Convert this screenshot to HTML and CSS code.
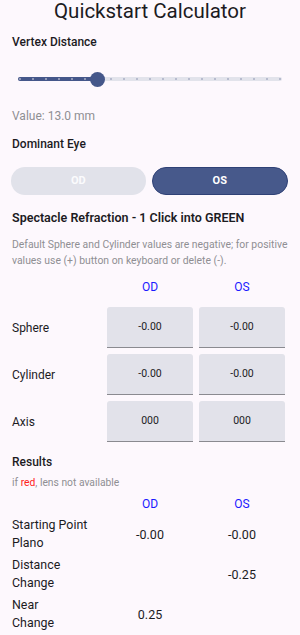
FILE: index.html
```html
<!DOCTYPE html>
<html>
<head>
    <meta charset="utf-8">
    <title>Quickstart Calculator</title>
    <link rel="stylesheet" href="styles.css">
</head>
<body>
    <div id="container">
        <h1 class="title">Quickstart Calculator</h1>

        <div class="label lbl_vertex">Vertex Distance</div>
        <div class="slider">
            <div class="track">
                <div class="track_active" style="width: 30%;"></div>
                <div class="ticks">
                    <span></span><span></span><span></span><span></span><span></span><span></span><span></span>
                    <span></span><span></span><span></span><span></span><span></span><span></span><span></span>
                    <span></span><span></span><span></span><span></span><span></span><span></span><span></span>
                </div>
                <div class="thumb" style="left: 30%;"></div>
            </div>
        </div>
        <div class="value">Value: 13.0 mm</div>

        <div class="label lbl_eye">Dominant Eye</div>
        <div class="eyebtns">
            <a href="#" role="button" class="eyebtn">OD</a>
            <a href="#" role="button" class="eyebtn on">OS</a>
        </div>

        <div class="label lbl_spec">Spectacle Refraction - 1 Click into GREEN</div>
        <p class="help">Default Sphere and Cylinder values are negative; for positive values use (+) button on keyboard or delete (-).</p>

        <div class="grid">
            <div></div>
            <div class="colhead">OD</div>
            <div class="colhead">OS</div>

            <div class="rowlbl">Sphere</div>
            <div class="field">-0.00</div>
            <div class="field">-0.00</div>

            <div class="rowlbl">Cylinder</div>
            <div class="field">-0.00</div>
            <div class="field">-0.00</div>

            <div class="rowlbl">Axis</div>
            <div class="field">000</div>
            <div class="field">000</div>
        </div>

        <div class="label lbl_res">Results</div>
        <div class="note">if <span class="red">red</span>, lens not available</div>

        <div class="grid results">
            <div></div>
            <div class="colhead">OD</div>
            <div class="colhead">OS</div>

            <div class="reslbl">Starting Point<br>Plano</div>
            <div class="resval">-0.00</div>
            <div class="resval">-0.00</div>

            <div class="reslbl">Distance<br>Change</div>
            <div class="resval"></div>
            <div class="resval">-0.25</div>

            <div class="reslbl">Near<br>Change</div>
            <div class="resval">0.25</div>
            <div class="resval"></div>
        </div>
    </div>
</body>
</html>
```
FILE: styles.css
```css
* {
    padding: 0px;
    margin: 0px;
    box-sizing: border-box;
    text-decoration: none;
}
body {
    background-color: #fdf8fd;
    font-family: Roboto, "Liberation Sans", sans-serif;
    color: #1c1b1f;
    width: 300px;
}
#container {
    padding: 0px 12px 20px 12px;
}
.title {
    font-size: 20.5px;
    font-weight: 400;
    text-align: center;
    line-height: 24px;
    margin-top: -1px;
}
.label {
    font-size: 12px;
    font-weight: 500;
    line-height: 16px;
}
.lbl_vertex {
    margin-top: 11px;
}
.slider {
    padding: 0px 6px;
    margin-top: 27px;
}
.track {
    position: relative;
    height: 4px;
    background-color: #e2e3eb;
    border-radius: 2px;
}
.track_active {
    height: 4px;
    background-color: #45578a;
    border-radius: 2px;
}
.ticks {
    position: absolute;
    left: 1px;
    right: 1px;
    top: 1px;
    display: flex;
    justify-content: space-between;
}
.ticks span {
    width: 2px;
    height: 2px;
    border-radius: 1px;
    background-color: #a9aec4;
}
.thumb {
    position: absolute;
    top: -5px;
    width: 15px;
    height: 15px;
    margin-left: -7px;
    border-radius: 50%;
    background-color: #45578a;
}
.value {
    margin-top: 27px;
    font-size: 12px;
    color: #8f8f93;
    line-height: 16px;
}
.lbl_eye {
    margin-top: 12px;
}
.eyebtns {
    display: flex;
    gap: 6px;
    margin-top: 15px;
    margin-left: -1px;
}
.eyebtn {
    flex: 1;
    height: 28px;
    line-height: 28px;
    border-radius: 14px;
    text-align: center;
    font-size: 11px;
    font-weight: 700;
    color: #fbfbfd;
    background-color: #e1e2ea;
}
.eyebtn.on {
    background-color: #47598b;
    border: 1px solid #2f4176;
    line-height: 26px;
    color: #fff;
}
.lbl_spec {
    margin-top: 15px;
    font-size: 12.5px;
    font-weight: 600;
}
.help {
    margin-top: 11px;
    font-size: 10.4px;
    line-height: 16px;
    color: #8f8f93;
}
.grid {
    display: grid;
    grid-template-columns: 89px 86px 86px;
    column-gap: 6px;
    row-gap: 6px;
    margin-top: 10px;
}
.colhead {
    text-align: center;
    color: #1a1aff;
    font-size: 12px;
    line-height: 16px;
    margin-bottom: 6px;
}
.rowlbl {
    display: flex;
    align-items: center;
    font-size: 12px;
}
.field {
    height: 41px;
    line-height: 40px;
    text-align: center;
    font-size: 10.5px;
    background-color: #e2e2ea;
    border-radius: 3px 3px 0px 0px;
    border-bottom: 1px solid #8a8a90;
}
.lbl_res {
    margin-top: 12px;
}
.note {
    margin-top: 6px;
    font-size: 10.3px;
    line-height: 14px;
    color: #8f8f93;
}
.red {
    color: #ff2020;
}
.results {
    margin-top: 6px;
    row-gap: 4px;
}
.results .colhead {
    margin-bottom: 0px;
}
.reslbl {
    font-size: 12.4px;
    line-height: 18px;
}
.resval {
    display: flex;
    align-items: center;
    justify-content: center;
    font-size: 12.5px;
}
```
